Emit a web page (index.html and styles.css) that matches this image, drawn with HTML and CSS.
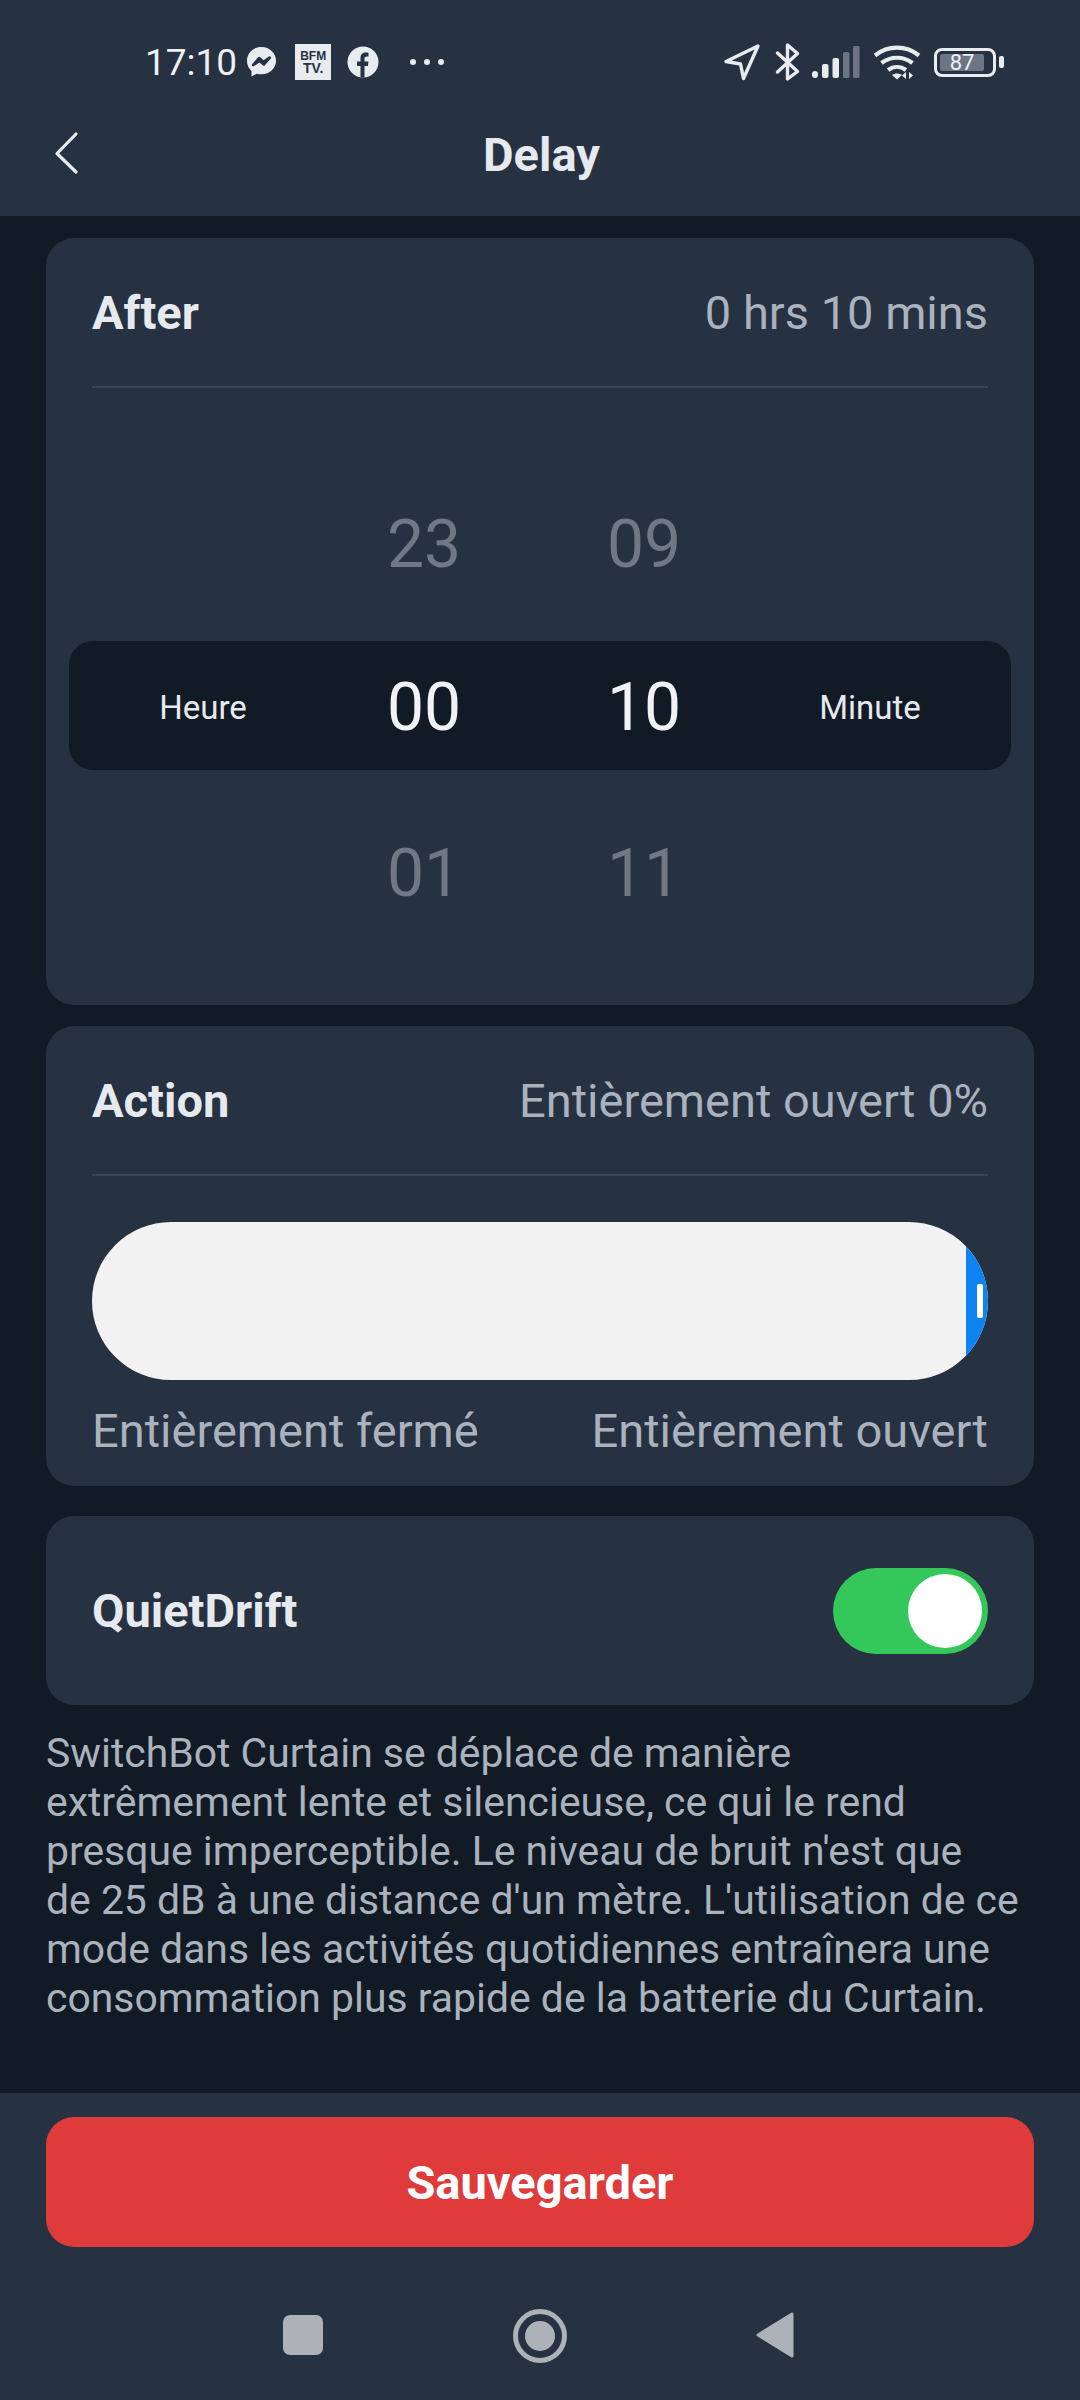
FILE: index.html
```html
<!DOCTYPE html>
<html lang="fr">
<head>
<meta charset="utf-8">
<title>Delay</title>
<link rel="stylesheet" href="styles.css">
</head>
<body>
<div class="phone">
  <header class="top">
    <div class="status">
      <div class="status-left">
        <span class="clock">17:10</span>
        <svg class="ic-msg" viewBox="0 0 32 34"><path fill="#e9ecef" d="M16 1C7.400 1 1 7.200 1 15.300c0 4.300 1.800 8 4.700 10.500V31.500l5.300-3c1.600.5 3.200.7 5 .7 8.600 0 15-6.200 15-13.900S24.600 1 16 1z"/><path fill="none" stroke="#263142" stroke-width="2.800" stroke-linejoin="round" d="M7.500 19.500l6-7 4.500 3.800 6.500-4.300-6 7-4.500-3.800z"/></svg>
        <span class="bfm"><span>BFM</span><span class="tv">TV.</span></span>
        <svg class="ic-fb" viewBox="0 0 32 32"><circle cx="16" cy="16" r="15.500" fill="#e9ecef"/><path fill="#263142" d="M13.500 31.500V20H10v-4.500h3.500V12c0-3.500 2.100-5.400 5.300-5.400 1.500 0 2.700.2 2.700.2v3.700h-1.700c-1.800 0-2.300 1-2.300 2.200v2.800h4l-.6 4.500h-3.400v11.500z"/></svg>
        <span class="dots"><i></i><i></i><i></i></span>
      </div>
      <div class="status-right">
        <svg class="ic-loc" viewBox="0 0 38 38"><path fill="none" stroke="#e9ecef" stroke-width="3.400" stroke-linejoin="round" d="M35 3L3 18.500l14.500 2.500 3 14.500z"/></svg>
        <svg class="ic-bt" viewBox="0 0 26 38"><path fill="none" stroke="#e9ecef" stroke-width="3.400" stroke-linejoin="round" stroke-linecap="round" d="M2.500 10l20 18.500L12.500 36V2l10 8.500-20 18.500"/></svg>
        <svg class="ic-sig" viewBox="0 0 50 34"><rect x="1" y="26" width="6" height="7" rx="3" fill="#e9ecef"/><rect x="11" y="19" width="6.500" height="14" rx="2" fill="#e9ecef"/><rect x="21.500" y="13" width="6.500" height="20" rx="2" fill="#e9ecef"/><rect x="32" y="7" width="6.500" height="26" rx="1.500" fill="#6d7585"/><rect x="42" y="1" width="6.500" height="32" rx="1.500" fill="#6d7585"/></svg>
        <svg class="ic-wifi" viewBox="0 0 48 36"><g fill="none" stroke="#e9ecef" stroke-width="4.200"><path d="M2 11.500C15 1 33 1 46 11.500"/><path d="M8.500 19C17.500 12 30.500 12 39.500 19"/><path d="M15 26C20.500 22 27.500 22 33 26"/></g><path fill="#e9ecef" d="M19 31c3-2 7-2 10 0l-5 4.500z"/><path fill="#e9ecef" d="M33 28v7l-4-3.500zM36 28v7l4-3.500z"/></svg>
        <span class="battery"><span class="batt-fill">87</span></span><span class="batt-cap"></span>
      </div>
    </div>
    <div class="titlebar">
      <svg class="back" viewBox="0 0 26 44"><path fill="none" stroke="#e9ecef" stroke-width="3.200" stroke-linecap="round" stroke-linejoin="round" d="M23 3L4 22.500 23 41"/></svg>
      <h1 class="title">Delay</h1>
    </div>
  </header>

  <main class="content">
    <section class="card card-after">
      <div class="card-head">
        <span class="label">After</span>
        <span class="value">0 hrs 10 mins</span>
      </div>
      <div class="picker">
        <div class="pick-row dim first"><span class="num n1">23</span><span class="num n2">09</span></div>
        <div class="pick-row selected">
          <span class="unit u1">Heure</span>
          <span class="num n1">00</span>
          <span class="num n2">10</span>
          <span class="unit u2">Minute</span>
        </div>
        <div class="pick-row dim last"><span class="num n1">01</span><span class="num n2">11</span></div>
      </div>
    </section>

    <section class="card card-action">
      <div class="card-head">
        <span class="label">Action</span>
        <span class="value">Entièrement ouvert 0%</span>
      </div>
      <div class="slider"><div class="slider-end"><span class="grip"></span></div></div>
      <div class="slider-labels"><span>Entièrement fermé</span><span>Entièrement ouvert</span></div>
    </section>

    <section class="card card-quiet">
      <span class="label">QuietDrift</span>
      <span class="toggle"><span class="knob"></span></span>
    </section>

    <p class="note">SwitchBot Curtain se déplace de manière extrêmement lente et silencieuse, ce qui le rend presque imperceptible. Le niveau de bruit n'est que<br>de 25 dB à une distance d'un mètre. L'utilisation de ce mode dans les activités quotidiennes entraînera une consommation plus rapide de la batterie du Curtain.</p>
  </main>

  <footer class="bottom">
    <button class="save">Sauvegarder</button>
    <nav class="navbar">
      <span class="nav-square"></span>
      <span class="nav-circle"><span></span></span>
      <svg class="nav-back" viewBox="0 0 38 46"><path fill="#adb1b8" stroke="#adb1b8" stroke-width="3" stroke-linejoin="round" d="M36 2v42L2 23z"/></svg>
    </nav>
  </footer>
</div>
</body>
</html>
```
FILE: styles.css
```css
* { box-sizing: border-box; }
html, body { margin: 0; padding: 0; }
body { width: 1080px; height: 2400px; background: #121a25; font-family: Roboto, "Noto Sans", sans-serif; overflow: hidden; }
.phone { width: 1080px; height: 2400px; display: flex; flex-direction: column; background: #121a25; }

.top { height: 216px; background: #263142; flex: none; }
.status { height: 92px; display: flex; justify-content: space-between; align-items: flex-end; padding: 0 76px 0 145px; }
.status-left, .status-right { display: flex; align-items: center; height: 60px; }
.clock { font-size: 37px; color: #eef0f3; margin-right: 9px; }
.ic-msg { width: 31px; height: 33px; margin-right: 18px; }
.bfm { width: 36px; height: 36px; background: #e9ecef; color: #263142; display: flex; flex-direction: column; align-items: center; justify-content: center; font-size: 12px; line-height: 12px; font-weight: 900; margin-right: 16px; font-family: "Liberation Sans", sans-serif; }
.bfm .tv { font-size: 14px; line-height: 13px; }
.ic-fb { width: 32px; height: 32px; margin-right: 31px; }
.dots { display: flex; gap: 8px; }
.dots i { width: 6px; height: 6px; border-radius: 50%; background: #e9ecef; display: block; }
.ic-loc { width: 38px; height: 38px; margin-right: 14px; }
.ic-bt { width: 26px; height: 40px; margin-right: 10px; }
.ic-sig { width: 50px; height: 34px; margin-right: 12px; }
.ic-wifi { width: 48px; height: 36px; margin-right: 13px; }
.battery { width: 62px; height: 29px; border: 3px solid #e9ecef; border-radius: 8px; padding: 3px; display: block; }
.batt-fill { display: block; width: 44px; height: 17px; background: #6d7585; border-radius: 2px; color: #eef0f3; font-size: 22px; line-height: 17px; text-align: center; }
.batt-cap { width: 5px; height: 12px; background: #e9ecef; border-radius: 2px; margin-left: 3px; }

.titlebar { height: 124px; padding-left: 3px; position: relative; display: flex; align-items: center; justify-content: center; }
.back { position: absolute; left: 53px; top: 39px; width: 26px; height: 44px; }
.title { margin: 0; font-size: 47px; font-weight: 700; color: #e6e9ee; }

.content { flex: 1; padding: 22px 46px 0; display: flex; flex-direction: column; }
.card { background: #263142; border-radius: 28px; padding: 0 46px; }
.card-after { height: 767px; }
.card-action { height: 460px; margin-top: 21px; }
.card-quiet { height: 189px; margin-top: 30px; display: flex; align-items: center; justify-content: space-between; }
.card-head { height: 150px; display: flex; justify-content: space-between; align-items: center; border-bottom: 2px solid #3a4557; }
.label { font-size: 47px; font-weight: 700; color: #e6e9ee; }
.value { font-size: 47px; color: #aab2bd; }

.picker { margin: 0 -23px; }
.pick-row { display: grid; grid-template-columns: 268px 174px 266px 186px; align-items: center; justify-items: center; }
.pick-row.selected { height: 129px; padding-top: 4px; background: #121a25; border-radius: 24px; color: #f0f2f5; }
.num { font-size: 66px; }
.n1 { grid-column: 2; }
.n2 { grid-column: 3; }
.dim { color: #6f7884; }
.first { height: 253px; padding-top: 59px; }
.last { height: 206px; }
.unit { font-size: 33px; color: #e6e9ee; }
.u1 { grid-column: 1; }
.u2 { grid-column: 4; }

.slider { height: 158px; margin-top: 46px; border-radius: 79px; background: #f2f2f2; overflow: hidden; display: flex; justify-content: flex-end; }
.slider-end { width: 22px; background: #0d84f2; display: flex; align-items: center; justify-content: center; padding-left: 6px; }
.grip { width: 6px; height: 34px; background: #fff; border-radius: 2px; display: block; }
.slider-labels { display: flex; justify-content: space-between; font-size: 47px; color: #aab2bd; margin-top: 23px; }

.toggle { width: 155px; height: 86px; border-radius: 43px; background: #34c85a; display: flex; align-items: center; justify-content: flex-end; padding-right: 6px; }
.knob { width: 74px; height: 74px; border-radius: 50%; background: #fff; display: block; }

.note { margin: 24px 0 0; font-size: 40.900px; line-height: 49px; color: #aab2bd; }

.bottom { height: 307px; flex: none; background: #263142; padding: 24px 46px 0; }
.save { display: block; width: 100%; height: 130px; border: 0; border-radius: 28px; background: #e03b3b; color: #fff; font: 700 47px Roboto, sans-serif; }
.navbar { height: 153px; position: relative; display: block; }
.nav-square { position: absolute; left: 237px; top: 68px; width: 40px; height: 40px; background: #adb1b8; border-radius: 7px; }
.nav-circle { position: absolute; left: 467px; top: 62px; width: 54px; height: 54px; border: 5px solid #adb1b8; border-radius: 50%; display: flex; align-items: center; justify-content: center; }
.nav-circle span { width: 30px; height: 30px; border-radius: 50%; background: #adb1b8; display: block; }
.nav-back { position: absolute; left: 710px; top: 65px; width: 38px; height: 46px; }
```
